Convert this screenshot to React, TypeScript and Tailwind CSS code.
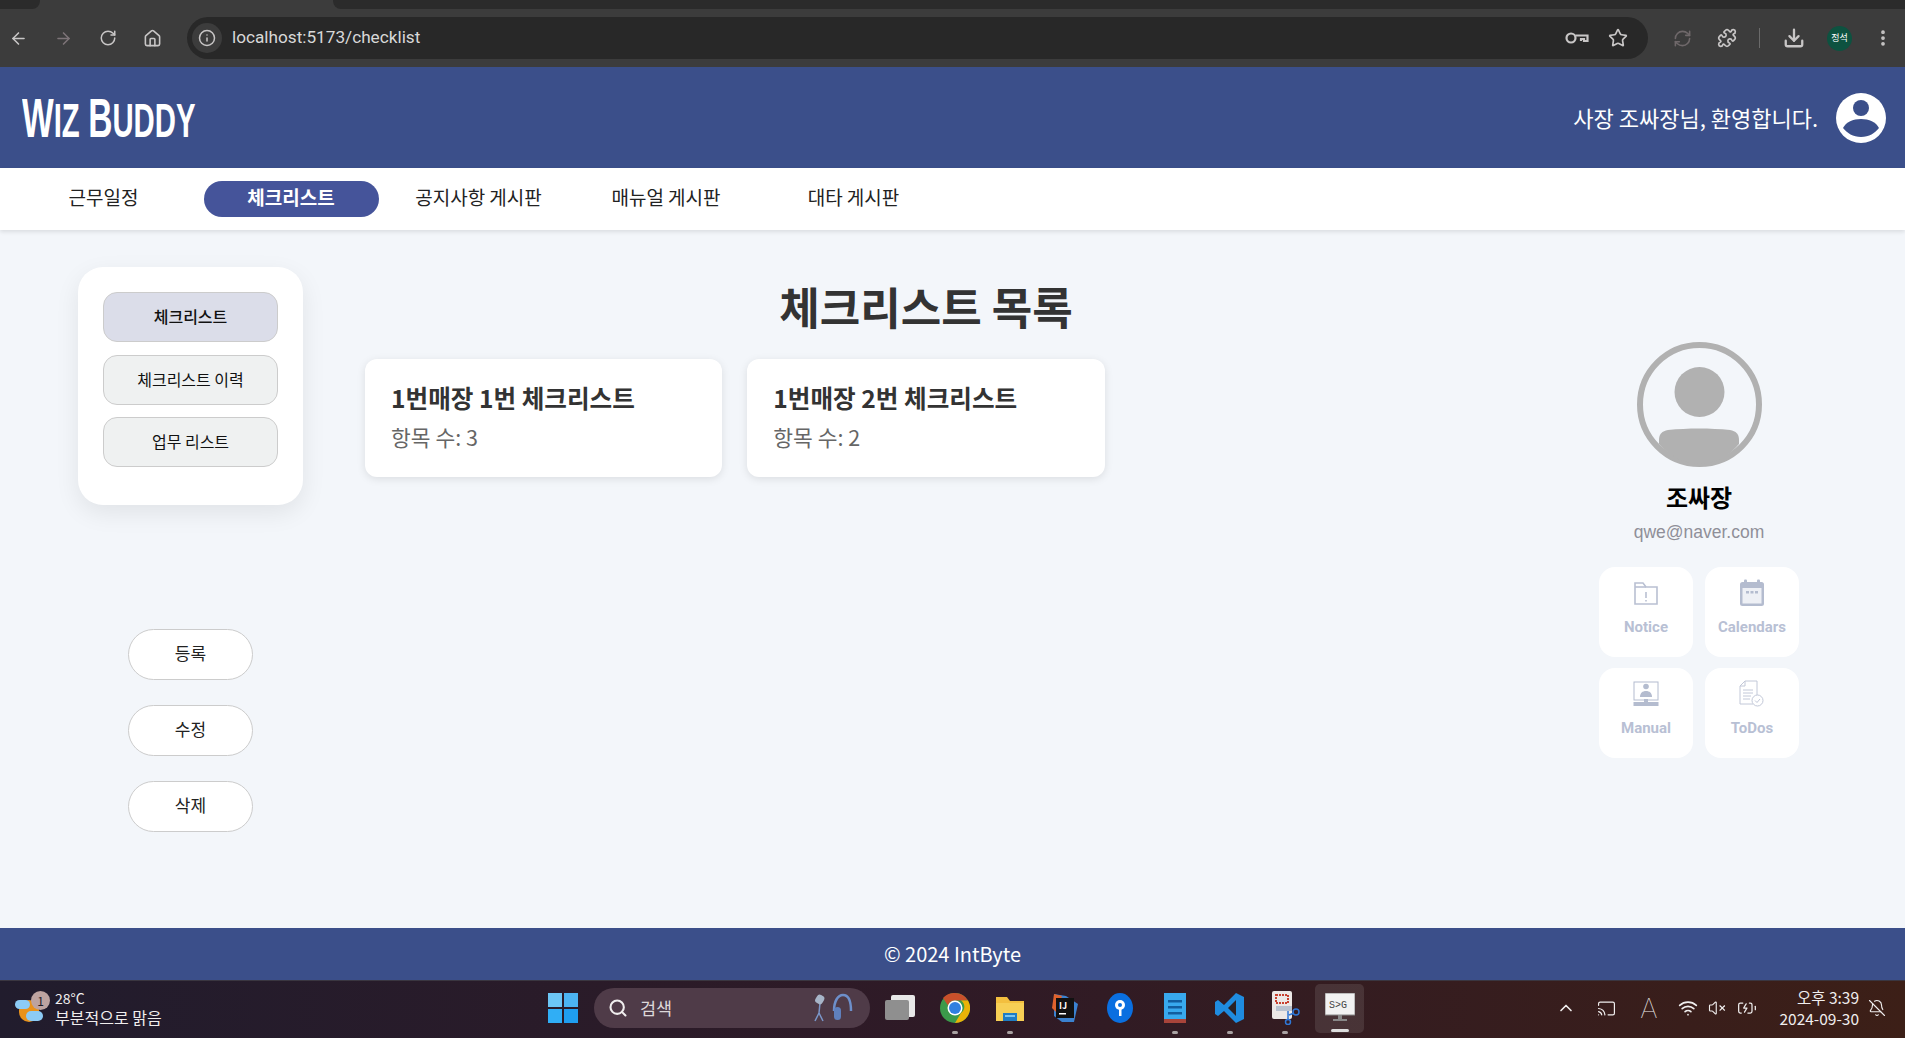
import React from 'react';
import {
  ArrowLeft,
  ArrowRight,
  RotateCw,
  RefreshCw,
  Home,
  Info,
  Star,
  Puzzle,
  Download,
  MoreVertical,
  Search,
  ChevronUp,
  Cast,
  Wifi,
  VolumeX,
  BatteryCharging,
  BellOff,
} from 'lucide-react';

const FONT = 'font-["Noto_Sans_CJK_KR","Noto_Sans",sans-serif]';

const navItems = [
  { label: '근무일정' },
  { label: '체크리스트', active: true },
  { label: '공지사항 게시판' },
  { label: '매뉴얼 게시판' },
  { label: '대타 게시판' },
];

const sideItems = [
  { label: '체크리스트', active: true },
  { label: '체크리스트 이력' },
  { label: '업무 리스트' },
];

const checklists = [
  { title: '1번매장 1번 체크리스트', count: 3 },
  { title: '1번매장 2번 체크리스트', count: 2 },
];

const NoticeIcon = () => (
  <svg width="26" height="26" viewBox="0 0 26 26" fill="none" stroke="#b9c0d2" strokeWidth="1.6">
    <path d="M2 24V3h8l3 4h11v17z" />
    <path d="M2 7h11" />
    <path d="M13 12v6M13 20v1.5" />
  </svg>
);

const CalendarIcon = () => (
  <svg width="26" height="28" viewBox="0 0 26 28" fill="#b4bccf">
    <rect x="1" y="3" width="24" height="24" rx="2.5" />
    <rect x="5" y="0.5" width="3" height="5" rx="1" />
    <rect x="18" y="0.5" width="3" height="5" rx="1" />
    <rect x="3.5" y="9" width="19" height="15.5" fill="#eef0f5" />
    <rect x="7" y="12" width="3" height="2.5" />
    <rect x="11.5" y="12" width="3" height="2.5" />
    <rect x="16" y="12" width="3" height="2.5" />
  </svg>
);

const ManualIcon = () => (
  <svg width="26" height="26" viewBox="0 0 26 26" fill="#b4bccf">
    <rect x="1" y="1" width="24" height="18" fill="none" stroke="#b4bccf" strokeWidth="1" />
    <circle cx="13" cy="5.5" r="2.8" />
    <path d="M7 16c0-4 2.500-6 6-6s6 2 6 6z" />
    <rect x="11" y="18" width="4" height="3" />
    <rect x="0.500" y="21" width="25" height="4" />
  </svg>
);

const TodosIcon = () => (
  <svg width="26" height="28" viewBox="0 0 26 28" fill="none" stroke="#c2c8d8" strokeWidth="1">
    <path d="M6 1h12v14M6 1L1 6v18h13" />
    <path d="M1 6h5V1" />
    <path d="M4 10h10M4 13h10M4 16h8M4 19h7" />
    <circle cx="18.500" cy="20.500" r="5.500" fill="#fff" />
    <path d="M16 20.500l2 2 3-3.500" />
  </svg>
);

const tiles = [
  { label: 'Notice', icon: NoticeIcon },
  { label: 'Calendars', icon: CalendarIcon },
  { label: 'Manual', icon: ManualIcon },
  { label: 'ToDos', icon: TodosIcon },
];

const BrowserBar = () => (
  <div className="bg-[#3c3c3c] h-[67px] shrink-0 flex flex-col">
    <div className="h-[9px] flex">
      <div className="w-[40px] bg-[#2b2b2b] rounded-br-lg" />
      <div className="w-[293px]" />
      <div className="flex-1 bg-[#2b2b2b] rounded-bl-lg" />
    </div>
    <div className="flex-1 flex items-center text-[#c8c6c6]">
      <div className="w-[187px] flex items-center pl-[9px] gap-[26px]">
        <ArrowLeft size={19} />
        <ArrowRight size={19} className="text-[#7d7478]" />
        <RotateCw size={18} />
        <Home size={19} />
      </div>
      <div className="w-[1461px] h-[42px] bg-[#282828] rounded-full flex items-center pl-[5px] pr-[20px]">
        <div className="w-[30px] h-[30px] rounded-full bg-[#3c3c3c] flex items-center justify-center">
          <Info size={18} />
        </div>
        <span className='ml-[10px] text-[17.200px] text-[#d8d8d8] font-["Roboto",sans-serif]'>localhost:5173/checklist</span>
        <div className="ml-auto flex items-center gap-[19px]">
          <svg width="24" height="14" viewBox="0 0 24 14" fill="none" stroke="currentColor" strokeWidth="2.200">
            <circle cx="6" cy="7" r="4.500" />
            <path d="M10.500 4.500H22.500V10H19V8H16V10" />
          </svg>
          <Star size={20} strokeWidth={2} />
        </div>
      </div>
      <div className="flex-1 flex items-center pl-[25px]">
        <RefreshCw size={19} className="text-[#6f686a]" />
        <Puzzle size={20} className="ml-[25px]" />
        <div className="w-px h-[20px] bg-[#6a6a6a] ml-[22px]" />
        <Download size={22} strokeWidth={2.500} className="ml-[23px]" />
        <div className='ml-[22px] w-[25px] h-[25px] rounded-full bg-[#0d5240] text-white text-[9px] flex items-center justify-center font-["Noto_Sans_CJK_KR",sans-serif]'>
          정석
        </div>
        <MoreVertical size={20} strokeWidth={2.500} className="ml-[21px]" />
      </div>
    </div>
  </div>
);

const Logo = () => (
  <div className='w-[300px] origin-left scale-x-[0.61] text-white font-bold leading-none whitespace-nowrap font-["Liberation_Sans",sans-serif] flex items-baseline pt-[2px]'>
    <span className="text-[55px]">W</span>
    <span className="text-[48px]">IZ</span>
    <span className="text-[55px] ml-[14px]">B</span>
    <span className="text-[48px]">UDDY</span>
  </div>
);

const UserCircle = () => (
  <svg width="50" height="50" viewBox="0 0 50 50">
    <circle cx="25" cy="25" r="25" fill="#fff" />
    <circle cx="25" cy="15" r="8" fill="#3b4f8a" />
    <path d="M7 35c3-6 10-9 18-9s15 3 18 9c-4 5-10 9-18 9S11 40 7 35z" fill="#3b4f8a" />
  </svg>
);

const ProfileAvatar = () => (
  <svg width="125" height="125" viewBox="0 0 125 125">
    <circle cx="62.500" cy="62.500" r="59.500" fill="none" stroke="#b1b1b1" strokeWidth="6" />
    <circle cx="62.500" cy="50" r="25" fill="#b1b1b1" />
    <path d="M22 102V98c0-6 3-9 9-10 20-2 42-2 62 0 6 1 9 4 9 10v4C92 114 78 122 62.500 122S33 114 22 102z" fill="#b1b1b1" />
  </svg>
);

const AppSlot = ({ children, dot }: { children: React.ReactNode; dot?: boolean }) => (
  <div className="relative w-[55px] h-[49px] flex items-center justify-center">
    {children}
    {dot && <div className="absolute bottom-[-1px] w-[6px] h-[3px] rounded-full bg-[#a9a2a2]" />}
  </div>
);

const Taskbar = () => (
  <div className='h-[58px] shrink-0 flex items-center pb-[3px] text-[#f0eeee] bg-gradient-to-r from-[#211c2d] via-[#2f1a26] to-[#3c1f17] border-t border-[#3a3640] font-["Noto_Sans_CJK_KR",sans-serif]'>
    <div className="w-[548px] shrink-0 flex items-center pl-[15px]">
      <div className="relative w-[32px] h-[30px]">
        <div className="absolute left-[4px] top-[7px] w-[20px] h-[22px] rounded-full bg-[#e8921c]" />
        <div className="absolute left-0 top-[7px] w-[15px] h-[9px] rounded-full bg-[#8ccbf5]" />
        <div className="absolute left-[11px] top-[18px] w-[17px] h-[10px] rounded-full bg-[#8ccbf5]" />
        <div className="absolute left-[16px] top-[-2px] w-[19px] h-[19px] rounded-full bg-[#bda3a0] text-[#1e1a24] text-[12px] leading-[19px] text-center">1</div>
      </div>
      <div className="ml-[8px] flex flex-col leading-[19px]">
        <span className="text-[14px]">28°C</span>
        <span className="text-[16px]">부분적으로 맑음</span>
      </div>
    </div>
    <svg width="30" height="30" viewBox="0 0 30 30" className="shrink-0">
      <rect x="0" y="0" width="14" height="14" fill="#6cc6f5" />
      <rect x="16" y="0" width="14" height="14" fill="#4cb4f2" />
      <rect x="0" y="16" width="14" height="14" fill="#30aef5" />
      <rect x="16" y="16" width="14" height="14" fill="#1f9ef0" />
    </svg>
    <div className="ml-[16px] w-[276px] h-[40px] rounded-full bg-[#4f3b48] flex items-center pl-[14px] pr-[14px] shrink-0">
      <Search size={20} strokeWidth={2.500} />
      <span className="ml-[12px] text-[17.500px] text-[#ddd8da]">검색</span>
      <svg width="46" height="30" viewBox="0 0 46 30" fill="none" className="ml-auto">
        <path d="M10 10l-1 10M9 20l-4 8M9 20l4 8" stroke="#7a96c8" strokeWidth="1.500" />
        <rect x="6" y="2" width="8" height="9" rx="3" transform="rotate(30 10 6)" fill="#a7b5c8" />
        <path d="M24 18c0-10 4-16 9-16s8 6 8 16" stroke="#6d8fca" strokeWidth="2.500" />
        <rect x="24" y="14" width="7" height="13" rx="3.500" fill="#5f80bd" />
      </svg>
    </div>
    {/* pinned apps */}
    <div className="ml-[16px] flex items-center">
      <div className="w-[55px] flex justify-center -ml-[14px]">
        <div className="relative w-[30px] h-[26px]">
          <div className="absolute left-[6px] top-0 w-[24px] h-[22px] bg-[#e8e8e8] rounded-[2px]" />
          <div className="absolute left-0 top-[5px] w-[24px] h-[20px] bg-[#8f8f8f] rounded-[2px]" />
        </div>
      </div>
      <AppSlot dot>
        <svg width="30" height="30" viewBox="0 0 30 30">
          <circle cx="15" cy="15" r="15" fill="#3b9a4a" />
          <path d="M15 0a15 15 0 0 1 13 7.500H15a7.500 7.500 0 0 0-7 5L3 5A15 15 0 0 1 15 0z" fill="#c8502b" />
          <path d="M28 7.500A15 15 0 0 1 15 30l6-10a7.500 7.500 0 0 0 0-12.500z" fill="#eab308" />
          <circle cx="15" cy="15" r="7.500" fill="#fff" />
          <circle cx="15" cy="15" r="6" fill="#2f7fe0" />
        </svg>
      </AppSlot>
      <AppSlot dot>
        <svg width="30" height="30" viewBox="0 0 30 30">
          <path d="M1 4h11l3 4h14v20H1z" fill="#f3bf3f" />
          <rect x="1" y="10" width="28" height="18" fill="#f7cf55" />
          <rect x="8" y="20" width="14" height="8" fill="#1f7cc4" />
          <rect x="10" y="22" width="10" height="2" fill="#7cc4ef" />
        </svg>
      </AppSlot>
      <AppSlot>
        <svg width="30" height="32" viewBox="0 0 30 32">
          <path d="M4 2l12 2 12 8-4 18-12 0-8-6z" fill="#3b82d0" />
          <path d="M4 2l8 2-6 16-4-4z" fill="#e0622d" />
          <rect x="6" y="6" width="18" height="20" fill="#111" />
          <text x="9" y="17" fontSize="9" fontWeight="700" fill="#fff">IJ</text>
          <rect x="9" y="21" width="7" height="1.500" fill="#fff" />
        </svg>
      </AppSlot>
      <AppSlot>
        <svg width="26" height="30" viewBox="0 0 26 30">
          <ellipse cx="13" cy="15" rx="13" ry="15" fill="#0a6fe0" />
          <circle cx="13" cy="12" r="5" fill="#fff" />
          <circle cx="13" cy="12" r="2" fill="#0a6fe0" />
          <rect x="12" y="15" width="2.500" height="8" fill="#fff" />
        </svg>
      </AppSlot>
      <AppSlot dot>
        <svg width="24" height="32" viewBox="0 0 24 32">
          <rect x="1" y="1" width="22" height="30" fill="#38a9ee" />
          <rect x="1" y="27" width="22" height="4" fill="#a8443a" />
          <rect x="5" y="8" width="14" height="2.500" fill="#125d9e" />
          <rect x="5" y="14" width="14" height="2.500" fill="#125d9e" />
          <rect x="5" y="20" width="14" height="2.500" fill="#125d9e" />
        </svg>
      </AppSlot>
      <AppSlot dot>
        <svg width="30" height="30" viewBox="0 0 30 30">
          <path d="M21 0l8 4v22l-8 4L9 18l-6 5-3-2v-12l3-2 6 5z" fill="#1f8ce0" />
          <path d="M21 7l-8 8 8 8z" fill="#2a2024" />
        </svg>
      </AppSlot>
      <AppSlot dot>
        <svg width="30" height="34" viewBox="0 0 30 34" fill="none">
          <rect x="2" y="0" width="20" height="28" rx="2" fill="#ece8e6" />
          <rect x="6" y="4" width="12" height="8" fill="none" stroke="#c8402f" strokeWidth="2" strokeDasharray="2 1" />
          <rect x="6" y="15" width="16" height="5" fill="#b9c2cf" />
          <circle cx="26" cy="21" r="3" stroke="#2f77d6" strokeWidth="1.500" />
          <circle cx="18" cy="31" r="2.500" stroke="#2f77d6" strokeWidth="1.500" />
          <path d="M24 22l-5 2M18 20v9" stroke="#2f77d6" strokeWidth="1.500" />
        </svg>
      </AppSlot>
      <div className="relative w-[49px] h-[49px] mx-[3px] rounded-[5px] bg-white/10 flex items-center justify-center">
        <svg width="30" height="30" viewBox="0 0 30 30">
          <rect x="0" y="0" width="30" height="22" fill="#f2f2f2" stroke="#888" />
          <text x="4" y="15" fontSize="10" fill="#444" fontFamily="Liberation Mono">S&gt;G</text>
          <rect x="13" y="22" width="4" height="4" fill="#888" />
          <rect x="8" y="26" width="14" height="2" fill="#888" />
        </svg>
        <div className="absolute bottom-[1px] w-[18px] h-[3px] rounded-full bg-[#ddd]" />
      </div>
    </div>
    {/* tray */}
    <div className="ml-auto flex items-center pr-[19px]">
      <ChevronUp size={20} />
      <Cast size={19} className="ml-[21px]" strokeWidth={1.500} />
      <span className='ml-[24px] text-[27px] leading-none font-thin font-["Inter",sans-serif]'>A</span>
      <Wifi size={20} className="ml-[21px]" />
      <VolumeX size={18} className="ml-[10px]" strokeWidth={1.500} />
      <BatteryCharging size={20} className="ml-[11px]" strokeWidth={1.500} />
      <div className="ml-[22px] flex flex-col items-end text-[15.500px] leading-[21px]">
        <span>오후 3:39</span>
        <span>2024-09-30</span>
      </div>
      <BellOff size={18} className="ml-[9px]" strokeWidth={1.500} />
    </div>
  </div>
);

const App: React.FC = () => {
  return (
    <div className={`w-full h-screen flex flex-col overflow-hidden bg-[#f3f6fa] ${FONT}`}>
      <BrowserBar />

      {/* Header */}
      <header className="h-[101px] shrink-0 bg-[#3b4f8a] flex items-center pl-[22px] pr-[19px] text-white">
        <div className="w-[200px]">
          <Logo />
        </div>
        <div className="ml-auto flex items-center gap-[18px]">
          <span className="text-[22px] pb-[1px]">사장 조싸장님, 환영합니다.</span>
          <UserCircle />
        </div>
      </header>

      {/* Nav */}
      <nav className="h-[62px] shrink-0 bg-white shadow-[0_2px_4px_rgba(0,0,0,0.1)] flex items-center pl-[16px] gap-[12.500px] z-10">
        {navItems.map((item) => (
          <div
            key={item.label}
            className={`w-[175px] h-[36px] rounded-full flex items-center justify-center text-[19px] pb-[3px] ${
              item.active ? 'bg-[#45549a] text-white font-bold' : 'text-[#222]'
            }`}
          >
            {item.label}
          </div>
        ))}
      </nav>

      {/* Main Content */}
      <main className="flex-1 flex min-h-0">
        <aside className="w-[225px] ml-[78px] pt-[37px] flex flex-col items-center">
          <div className="w-full h-[238px] bg-white rounded-[25px] shadow-[0_8px_24px_rgba(0,0,0,0.08)] pt-[25px] px-[25px] flex flex-col gap-[12.500px]">
            {sideItems.map((item) => (
              <div
                key={item.label}
                className={`h-[50px] rounded-[14px] border border-[#cccccc] flex items-center justify-center text-[16px] pb-[2px] text-[#111] ${
                  item.active ? 'bg-[#dbdde9] font-medium' : 'bg-[#eff1f1]'
                }`}
              >
                {item.label}
              </div>
            ))}
          </div>
          <div className="mt-[124px] flex flex-col gap-[25px]">
            {['등록', '수정', '삭제'].map((label) => (
              <div
                key={label}
                className="w-[125px] h-[51px] rounded-full bg-white border border-[#cccccc] flex items-center justify-center text-[17px] pb-[3px] text-[#222]"
              >
                {label}
              </div>
            ))}
          </div>
        </aside>

        <section className="w-[1122px] ml-[62px] flex flex-col">
          <h1 className="h-[129px] pt-[48px] text-center text-[44px] leading-[56px] font-bold text-[#333333]">체크리스트 목록</h1>
          <div className="grid grid-cols-3 gap-[25px]">
            {checklists.map((c) => (
              <div key={c.title} className="h-[118px] bg-white rounded-[12px] shadow-[0_2px_8px_rgba(0,0,0,0.1)] pt-[21px] px-[26px]">
                <h3 className="text-[24.600px] leading-[34px] font-bold text-[#333333]">{c.title}</h3>
                <p className="mt-[8px] text-[21.500px] leading-[30px] text-[#666666]">항목 수: {c.count}</p>
              </div>
            ))}
          </div>
        </section>

        <aside className="w-[200px] ml-[112px] pt-[112px] flex flex-col items-center">
          <ProfileAvatar />
          <div className="mt-[14px] text-[24px] leading-[32px] font-bold text-black">조싸장</div>
          <div className='mt-[7px] text-[17.500px] leading-[24px] text-[#8f8f98] font-["Liberation_Sans",sans-serif]'>qwe@naver.com</div>
          <div className="mt-[23px] grid grid-cols-2 gap-x-[12px] gap-y-[11px]">
            {tiles.map((t) => (
              <div key={t.label} className="w-[94px] h-[90px] bg-white rounded-[16px] flex flex-col items-center pt-[11px]">
                <div className="h-[30px] flex items-center justify-center">
                  <t.icon />
                </div>
                <span className='mt-[9px] text-[15px] leading-[20px] font-bold text-[#b8c0d4] font-["Roboto",sans-serif]'>{t.label}</span>
              </div>
            ))}
          </div>
        </aside>
      </main>

      {/* Footer */}
      <footer className="h-[52px] shrink-0 bg-[#3b4f8a] flex items-center justify-center text-white text-[20px]">
        © 2024 IntByte
      </footer>

      <Taskbar />
    </div>
  );
};

export default App;
